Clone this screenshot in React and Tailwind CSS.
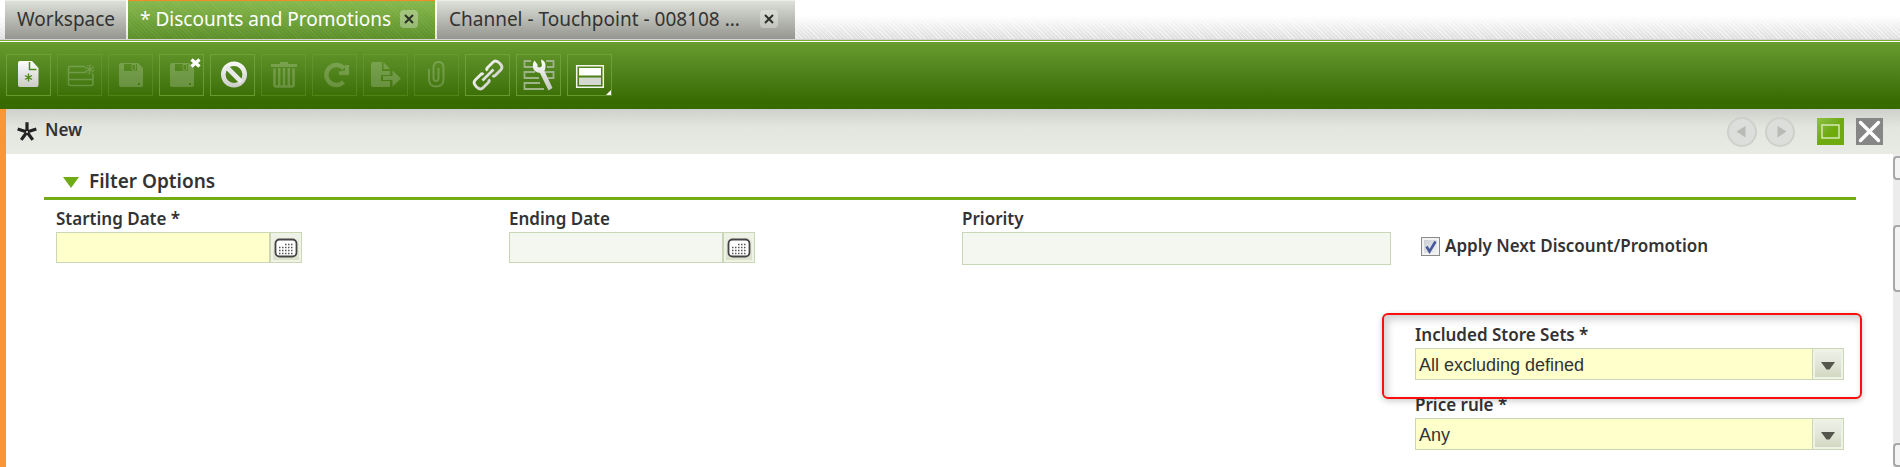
import { useState } from 'react'
import clsx from 'clsx'

const TABS = [
  { id: 'workspace', label: 'Workspace', width: 'w-[121px]' },
  { id: 'discounts', label: '* Discounts and Promotions', width: 'w-[307px]', closable: true },
  { id: 'channel', label: 'Channel - Touchpoint - 008108 ...', width: 'w-[358px]', closable: true },
]

const HATCH_LIGHT =
  'bg-[repeating-linear-gradient(45deg,rgba(255,255,255,0.06)_0px,rgba(255,255,255,0.06)_1px,transparent_1px,transparent_3px)]'

function Asterisk({ cx, cy, r, ...props }) {
  const arms = [0, 1, 2, 3, 4].map((i) => {
    const a = (i * 2 * Math.PI) / 5 - Math.PI / 2
    return `M${cx} ${cy}L${cx + r * Math.cos(a)} ${cy + r * Math.sin(a)}`
  })
  return <path d={arms.join('')} fill="none" {...props} />
}

function Star6({ cx, cy, r, ...props }) {
  const dx = r * 0.87
  const dy = r * 0.5
  const d = `M${cx} ${cy - r}V${cy + r}M${cx - dx} ${cy - dy}L${cx + dx} ${cy + dy}M${cx - dx} ${cy + dy}L${cx + dx} ${cy - dy}`
  return <path d={d} fill="none" {...props} />
}

function Floppy() {
  return (
    <g>
      <path
        fillRule="evenodd"
        d="M13 9H30L35 14V31Q35 33 33 33H13Q11 33 11 31V11Q11 9 13 9ZM16 10V17H29V10ZM30 29V31H32V29Z"
        fill="#fff"
      />
      <path d="M24 10.5H27.5V16H24Z" fill="none" stroke="#fff" strokeWidth="1" />
    </g>
  )
}

const ICONS = {
  create: (
    <>
      <path d="M14 7H26L32.5 14V31Q32.5 33 30.500 33H14Q12 33 12 31V9Q12 7 14 7Z" fill="url(#metal)" />
      <path d="M23.500 8V15.500H30.500" fill="none" stroke="#4c8a14" strokeWidth="1.500" />
      <Star6 cx={22.5} cy={23.5} r={4} stroke="#4c8a14" strokeWidth="1.4" />
    </>
  ),
  createRow: (
    <>
      <path
        d="M28 12.500H13Q11.500 12.500 11.500 14V29.500Q11.500 31.500 13.500 31.500H34Q36 31.500 36 29.500V20M11.500 18.500H29M11.500 25.500H36"
        fill="none"
        stroke="#fff"
        strokeWidth="1.500"
      />
      <circle cx="32.500" cy="15.500" r="4.500" fill="none" stroke="#fff" strokeWidth="1" strokeDasharray="2 1.500" />
      <Star6 cx={32.5} cy={15.5} r={4} stroke="#fff" strokeWidth="1.3" />
    </>
  ),
  save: <Floppy />,
  saveClose: (
    <>
      <g opacity="0.2">
        <Floppy />
      </g>
      <path d="M32.500 5.500L40.500 12.500M40.500 5.500L32.500 12.500" stroke="#fff" strokeWidth="3.400" />
    </>
  ),
  cancel: (
    <>
      <circle cx="24" cy="20.500" r="10.700" fill="none" stroke="url(#metal)" strokeWidth="4.600" />
      <path d="M16.500 13L31.500 28" stroke="#e9e9e9" strokeWidth="4.600" />
    </>
  ),
  remove: (
    <>
      <path d="M19 8H27V10H36V13H10V10H19Z" fill="#fff" />
      <path
        d="M13.500 14.500V31Q13.500 32.500 15 32.500H31Q32.500 32.500 32.500 31V14.500M18.200 14V32M23 14V32M27.800 14V32"
        fill="none"
        stroke="#fff"
        strokeWidth="2.600"
      />
    </>
  ),
  refresh: (
    <>
      <path d="M32 14.500A10 10 0 1 0 31.500 28" fill="none" stroke="#fff" strokeWidth="4.400" />
      <path d="M37 11V21H27V17.500L33 16.500V11Z" fill="#fff" />
    </>
  ),
  exportDoc: (
    <>
      <path d="M10 8H19V17H27V21H18V27H27V32Q27 33 26 33H10Q8 33 8 31V10Q8 8 10 8Z" fill="#fff" />
      <path d="M20.500 8L27 15H20.500Z" fill="#fff" />
      <path d="M20 22H29.500V16.500L38 24.500L29.500 32.500V26H20Z" fill="#fff" />
    </>
  ),
  attach: (
    <path
      d="M15 15V25Q15 32.500 22 32.500Q29.500 32.500 29.500 25V14Q29.500 8 24.500 8Q19.500 8 19.500 14V24Q19.500 27 22 27Q24.500 27 24.500 24V14"
      fill="none"
      stroke="#fff"
      strokeWidth="2"
    />
  ),
  link: (
    <g transform="rotate(-45 23 21)" fill="none" stroke="url(#metal)" strokeWidth="2.800">
      <path d="M20 17.500V16.500Q20 15.500 18 15.500H10.500Q6.500 15.500 6.500 21Q6.500 26.500 10.500 26.500H18Q20 26.500 20 25.500V24.500" />
      <path d="M26 17.500V16.500Q26 15.500 28 15.500H35.500Q39.500 15.500 39.500 21Q39.500 26.500 35.500 26.500H28Q26 26.500 26 25.500V24.500" />
      <path d="M16 20.500H30V21.500H16Z" strokeWidth="1.600" />
    </g>
  ),
  tools: (
    <>
      <path
        d="M15 7H8.500V13H17M30 7H37.500V13H31M19 18H8.500V24H23M29 18H37.500V24H32M24 29H8.500V35H28"
        fill="none"
        stroke="#9fb388"
        strokeWidth="1.800"
      />
      <path
        d="M18.500 6.500L21.500 10.500V13L24 13.500L26 12L25 5.500Q30 7 29.500 12.500Q29.500 15 28.500 17L36.500 34L32.500 36.500L24 19Q17 18 16.800 12Q16.500 9 18.500 6.500Z"
        fill="url(#metal)"
      />
    </>
  ),
  layout: (
    <>
      <path d="M9.700 11.700H36.300V33.300H9.700Z" fill="none" stroke="#f2f5ee" strokeWidth="1.500" />
      <path d="M12 14H34V21.500H12Z" fill="#fff" />
      <path d="M12 23.500H34V31H12Z" fill="#d5d8d1" />
      <path d="M44 36V41.500H38.500Z" fill="#fff" />
    </>
  ),
}

const TOOLS = [
  { id: 'create', label: 'New' },
  { id: 'createRow', label: 'New row', disabled: true },
  { id: 'save', label: 'Save', disabled: true },
  { id: 'saveClose', label: 'Save and close' },
  { id: 'cancel', label: 'Cancel' },
  { id: 'remove', label: 'Delete', disabled: true },
  { id: 'refresh', label: 'Refresh', disabled: true },
  { id: 'exportDoc', label: 'Export', disabled: true },
  { id: 'attach', label: 'Attachments', disabled: true },
  { id: 'link', label: 'Link' },
  { id: 'tools', label: 'Tools' },
  { id: 'layout', label: 'Layout' },
]

function Tab({ tab, active, onSelect }) {
  return (
    <div
      className={clsx(
        'h-[39px] shrink-0 border-t',
        tab.width,
        active
          ? 'border-t-[#f08c28] bg-linear-to-b from-[#86b84c] to-[#5c8f28] text-white'
          : 'border-t-[#eceee8] bg-linear-to-b from-[#dde0d8] to-[#94968f] text-[#333]',
      )}
    >
      <div className={clsx('flex h-full items-center justify-between pr-[17px] pb-0.5 pl-3', active && HATCH_LIGHT)}>
        <button type="button" onClick={onSelect} className="text-[19px] leading-6 whitespace-nowrap">
          {tab.label}
        </button>
        {tab.closable && (
          <button
            type="button"
            aria-label={`Close ${tab.label}`}
            className="flex size-[18px] items-center justify-center rounded-sm bg-white/30"
          >
            <svg viewBox="0 0 10 10" className="size-2.5">
              <path d="M1 1L9 9M9 1L1 9" stroke="#2c2f28" strokeWidth="2" />
            </svg>
          </button>
        )}
      </div>
    </div>
  )
}

function ToolButton({ tool }) {
  return (
    <button
      type="button"
      aria-label={tool.label}
      disabled={tool.disabled}
      className={clsx(
        'h-[42px] w-[45px] shrink-0 border',
        tool.disabled ? 'border-[#72a83c]/35' : 'border-[#72a83c]/75',
      )}
    >
      <svg viewBox="1 1 43 40" className={clsx('h-10 w-[43px]', tool.disabled && 'opacity-20')}>
        {ICONS[tool.id]}
      </svg>
    </button>
  )
}

function Label({ htmlFor, children }) {
  return (
    <label htmlFor={htmlFor} className="block h-6 text-[17px] leading-[22px] font-semibold whitespace-nowrap">
      {children}
    </label>
  )
}

function DateField({ id, label, required }) {
  return (
    <div>
      <Label htmlFor={id}>{label}</Label>
      <div className="flex h-[31px]">
        <input
          id={id}
          type="text"
          className={clsx(
            'w-[214px] border border-[#c9d7b6] px-1 outline-none',
            required ? 'bg-[#ffffcc]' : 'bg-[#f4f7f0]',
          )}
        />
        <button
          type="button"
          aria-label={`Pick ${label}`}
          className="flex w-8 items-center justify-center border border-[#c9d7b6] bg-linear-to-b from-[#f1f4ea] to-[#d9dfc8] shadow-[inset_0_0_0_2px_#eef3e6]"
        >
          <svg viewBox="0 0 24 20" className="h-5 w-6">
            <rect x="1.500" y="1.500" width="21" height="17" rx="4" fill="#fff" stroke="#444" strokeWidth="1.800" />
            <path
              d="M11 6.500H20M5 9.500H20M5 12.500H20M5 15.500H20"
              stroke="#555"
              strokeWidth="1.500"
              strokeDasharray="1.500 1.500"
            />
          </svg>
        </button>
      </div>
    </div>
  )
}

function SelectField({ id, label, options, highlighted }) {
  return (
    <div className="relative">
      <Label htmlFor={id}>{label}</Label>
      <div className="relative h-8">
        <select
          id={id}
          className="size-full appearance-none border border-[#c9d7b6] bg-[#ffffcc] pt-0.5 pr-9 pl-[3px] font-['Liberation_Sans',sans-serif] text-lg leading-6 outline-none"
        >
          {options.map((option) => (
            <option key={option}>{option}</option>
          ))}
        </select>
        <span className="pointer-events-none absolute inset-y-0 right-0 flex w-8 items-center justify-center border border-[#c9d7b6] bg-linear-to-b from-[#f0f2e9] via-[#e2e6d8] to-[#d0d6be] shadow-[inset_0_0_0_2px_#eef3e6]">
          <svg viewBox="0 0 14 8" className="mt-1 h-2 w-3.5">
            <path d="M0 0H14L8.500 7.500H5.500Z" fill="#55574c" />
          </svg>
        </span>
      </div>
      {highlighted && (
        <div className="pointer-events-none absolute -top-[11px] -right-[18px] -bottom-[19px] -left-[33px] z-10 rounded-md border-2 border-[#fa0f0f] shadow-[0_2px_6px_rgba(0,0,0,0.2),inset_3px_4px_8px_rgba(0,0,0,0.2)]" />
      )}
    </div>
  )
}

function FormHeader() {
  return (
    <header className="bg-linear-to-b from-[#cdd0ca] via-[#e2e5de] via-40% to-[#e8ebe4]">
      <div className={clsx('flex h-[45px] items-center pr-[17px] pl-[11px]', HATCH_LIGHT)}>
        <svg viewBox="0 0 20 20" className="size-5">
          <Asterisk cx={10} cy={10} r={9.8} stroke="#222" strokeWidth="3.2" />
          <circle cx="10" cy="10" r="1" fill="#e8ebe4" />
        </svg>
        <h1 className="mb-1 ml-2 text-[17px] leading-6 font-semibold">New</h1>
        <div className="ml-auto flex items-center">
          <button type="button" aria-label="Previous" disabled className="size-[30px] rounded-full border-2 border-[#cdd0cb] bg-[#dbdeda]">
            <svg viewBox="0 0 26 26" className="size-full">
              <path d="M16.500 7V18.500L7.500 12.500Z" fill="#b7bab5" />
            </svg>
          </button>
          <button type="button" aria-label="Next" disabled className="ml-2 size-[30px] rounded-full border-2 border-[#cdd0cb] bg-[#dbdeda]">
            <svg viewBox="0 0 26 26" className="size-full">
              <path d="M10.500 7V18.500L19.500 12.500Z" fill="#b7bab5" />
            </svg>
          </button>
          <button type="button" aria-label="Maximize" className="ml-[22px] size-[27px] bg-linear-to-br from-[#8fc044] to-[#6eaa10] to-50%">
            <svg viewBox="0 0 27 27" className="size-full">
              <rect x="5" y="7" width="17" height="13" fill="none" stroke="#d5e8b4" strokeWidth="1.500" />
            </svg>
          </button>
          <button type="button" aria-label="Close" className="ml-3 size-[27px] bg-[#868686]">
            <svg viewBox="0 0 27 27" className="size-full">
              <path d="M4.500 4.500L22.500 22.500M22.500 4.500L4.500 22.500" stroke="#fff" strokeWidth="3.400" strokeLinecap="round" />
            </svg>
          </button>
        </div>
      </div>
    </header>
  )
}

// The right edge of the window cuts the scroll bar off, so only its left strip shows.
function ScrollStrip() {
  return (
    <div className="flex w-[7px] shrink-0 flex-col bg-[#ececec]" aria-hidden="true">
      <div className="mt-0.5 h-6 rounded-l-sm border-2 border-r-0 border-[#a8a8a8] bg-[#f4f4f4]" />
      <div className="mt-[45px] h-[67px] rounded-l-sm border-2 border-r-0 border-[#a8a8a8] bg-[#f4f4f4]" />
      <div className="mt-auto h-6 rounded-l-sm border-2 border-r-0 border-[#a8a8a8] bg-[#f4f4f4]" />
    </div>
  )
}

export default function App() {
  const [activeTab, setActiveTab] = useState('discounts')
  const [applyNext, setApplyNext] = useState(true)

  return (
    <div className="flex min-h-screen flex-col bg-white font-['Noto_Sans',sans-serif] text-[#333]">
      <svg className="absolute size-0" aria-hidden="true">
        <defs>
          <linearGradient id="metal" gradientUnits="userSpaceOnUse" x1="0" y1="6" x2="0" y2="36">
            <stop offset="0" stopColor="#fff" />
            <stop offset="1" stopColor="#c4c6c0" />
          </linearGradient>
        </defs>
      </svg>

      <nav className="bg-linear-to-b from-white from-40% to-[#dedede]">
        <div className="flex gap-0.5 bg-[repeating-linear-gradient(45deg,rgba(255,255,255,0.5)_0px,rgba(255,255,255,0.5)_1px,transparent_1px,transparent_3px)] pl-[5px]">
          {TABS.map((tab) => (
            <Tab key={tab.id} tab={tab} active={tab.id === activeTab} onSelect={() => setActiveTab(tab.id)} />
          ))}
        </div>
      </nav>

      <div className="border-t border-[#d4d4d4] bg-white">
        <div className="border-t border-[#79ad2c] pt-px">
          <div className="flex h-[67px] gap-1.5 bg-linear-to-b from-[#689c30] to-[#376a00] to-90% px-1.5 pt-3">
            {TOOLS.map((tool) => (
              <ToolButton key={tool.id} tool={tool} />
            ))}
          </div>
        </div>
      </div>

      <main className="flex grow flex-col border-l-[6px] border-[#fb9632]">
        <FormHeader />
        <div className="flex grow">
          <form className="grow pt-2 pr-[37px] pb-4 pl-[38px]">
            <h2 className="border-b-3 border-[#74ac16]">
              <button type="button" className="flex h-[35px] items-center gap-2.5 pt-0.5 pl-[19px] text-[19px] leading-6 font-semibold">
                <svg viewBox="0 0 16 11" className="mt-1 h-[11px] w-4">
                  <path d="M0 0H16L8 11Z" fill="#6fab14" />
                </svg>
                Filter Options
              </button>
            </h2>
            <div className="grid grid-cols-4 pt-2">
              <div className="px-3">
                <DateField id="start" label="Starting Date *" required />
              </div>
              <div className="px-3">
                <DateField id="end" label="Ending Date" />
              </div>
              <div className="px-3">
                <Label htmlFor="priority">Priority</Label>
                <input
                  id="priority"
                  type="text"
                  className="h-[33px] w-full border border-[#c9d7b6] bg-[#f4f7f0] px-1 outline-none"
                />
              </div>
              <div className="px-3">
                <label className="flex h-[116px] items-start gap-[5px] pt-[26px] pl-1.5 text-[17px] leading-6 font-semibold whitespace-nowrap">
                  <input
                    type="checkbox"
                    checked={applyNext}
                    onChange={(e) => setApplyNext(e.target.checked)}
                    className="peer sr-only"
                  />
                  <span className="mt-[3px] flex size-[19px] items-center justify-center border border-[#8b8b8b] bg-linear-to-br from-[#c4c8d0] to-[#f8f8f8] shadow-[inset_0_0_0_2px_#f2f2f2]">
                    {applyNext && (
                      <svg viewBox="0 0 14 14" className="size-3.5">
                        <path d="M2.500 6.500L5.500 11.500L11.500 1.500" fill="none" stroke="#46589c" strokeWidth="2.600" />
                      </svg>
                    )}
                  </span>
                  Apply Next Discount/Promotion
                </label>
                <div className="flex flex-col gap-3.5">
                  <SelectField
                    id="storeSets"
                    label="Included Store Sets *"
                    options={['All excluding defined', 'All', 'Only defined']}
                    highlighted
                  />
                  <SelectField id="priceRule" label="Price rule *" options={['Any', 'All']} />
                </div>
              </div>
            </div>
          </form>
          <ScrollStrip />
        </div>
      </main>
    </div>
  )
}
